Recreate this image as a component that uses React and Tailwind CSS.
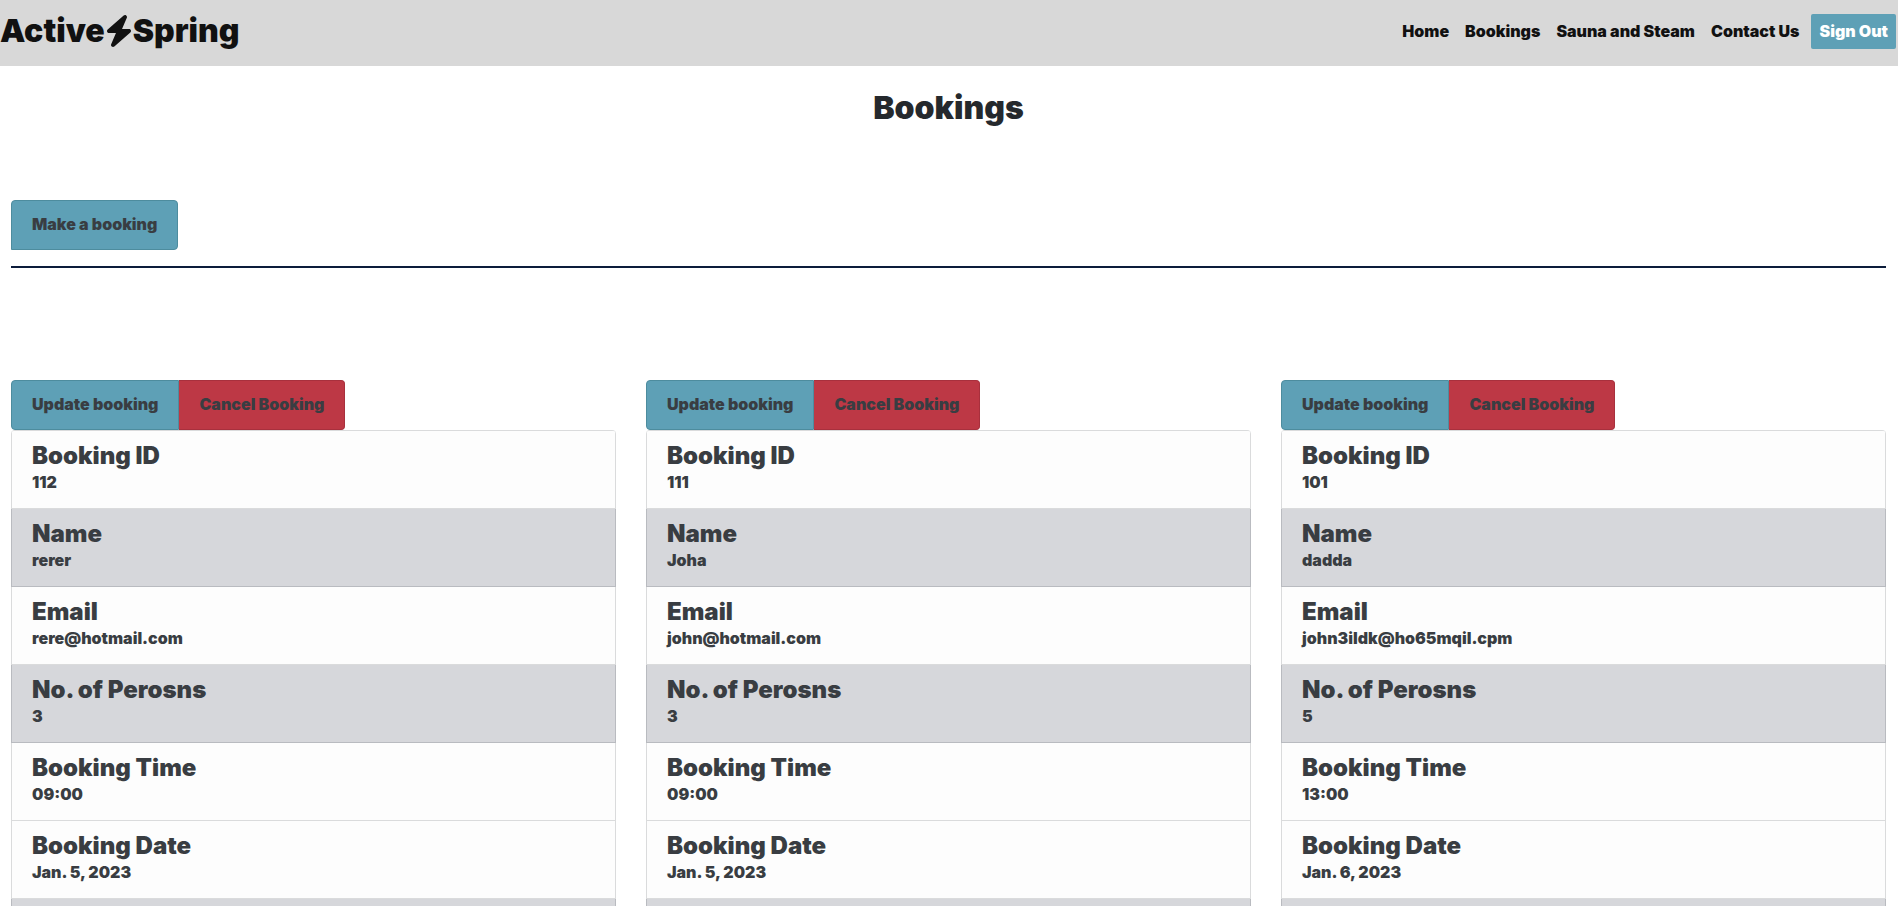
import { FaBolt } from "react-icons/fa6";

const links = ["Home", "Bookings", "Sauna and Steam", "Contact Us"];

const bookings = [
  { id: "112", name: "rerer", email: "rere@hotmail.com", persons: "3", time: "09:00", date: "Jan. 5, 2023" },
  { id: "111", name: "Joha", email: "john@hotmail.com", persons: "3", time: "09:00", date: "Jan. 5, 2023" },
  { id: "101", name: "dadda", email: "john3ildk@ho65mqil.cpm", persons: "5", time: "13:00", date: "Jan. 6, 2023" },
];

const light = "border-[#dadbdc] bg-[#fdfdfd]";
const shaded = "border-[#b9bbc0] bg-[#d6d7db]";

function Row({ label, value, tone }) {
  return (
    <li className={`border-x border-b px-5 pt-2.5 pb-3.5 ${tone}`}>
      <h2 className="text-2xl leading-[29px]">{label}</h2>
      <p className="text-base leading-6">{value}</p>
    </li>
  );
}

function Booking({ booking }) {
  return (
    <section>
      <div className="flex">
        <button className="h-[50px] rounded-l border border-[#4d8c9e] bg-[#5ea0b6] px-5 pb-0.5">Update booking</button>
        <button className="h-[50px] rounded-r border border-l-0 border-[#a8303d] bg-[#bd3845] px-5 pb-0.5">Cancel Booking</button>
      </div>
      <ul className="overflow-hidden rounded-t border-t border-[#dadbdc]">
        <Row label="Booking ID" value={booking.id} tone={light} />
        <Row label="Name" value={booking.name} tone={shaded} />
        <Row label="Email" value={booking.email} tone={light} />
        <Row label="No. of Perosns" value={booking.persons} tone={shaded} />
        <Row label="Booking Time" value={booking.time} tone={light} />
        <Row label="Booking Date" value={booking.date} tone={light} />
        <li className="h-[7px] border-x border-[#b9bbc0] bg-[#d6d7db]" />
      </ul>
    </section>
  );
}

export default function App() {
  return (
    <div className="bg-white font-['Inter',sans-serif] font-black text-[#393d42]">
      <header className="flex h-[66px] items-center justify-between bg-[#d8d8d8] pr-0.5 pb-1 text-[#111]">
        <a href="#home" className="flex items-center text-[32px] leading-10">
          Active
          <FaBolt className="h-8 w-7" />
          Spring
        </a>
        <nav className="flex items-center gap-4">
          {links.map((l) => (
            <a key={l} href="#" className="text-base">{l}</a>
          ))}
          <button className="-ml-1 h-[35px] rounded-xs bg-[#5ea0b6] px-2 text-white">Sign Out</button>
        </nav>
      </header>
      <main className="pt-[22px] pr-3 pl-[11px]">
        <h1 className="text-center text-[32px] leading-10 text-[#25292d]">Bookings</h1>
        <button className="mt-[72px] block h-[50px] rounded rounded-bl-none border border-[#4d8c9e] bg-[#5ea0b6] px-5 pb-0.5">
          Make a booking
        </button>
        <hr className="mt-4 border-t-2 border-[#0c1c3b]" />
        <div className="mt-28 grid grid-cols-3 gap-[30px]">
          {bookings.map((b) => (
            <Booking key={b.id} booking={b} />
          ))}
        </div>
      </main>
    </div>
  );
}
